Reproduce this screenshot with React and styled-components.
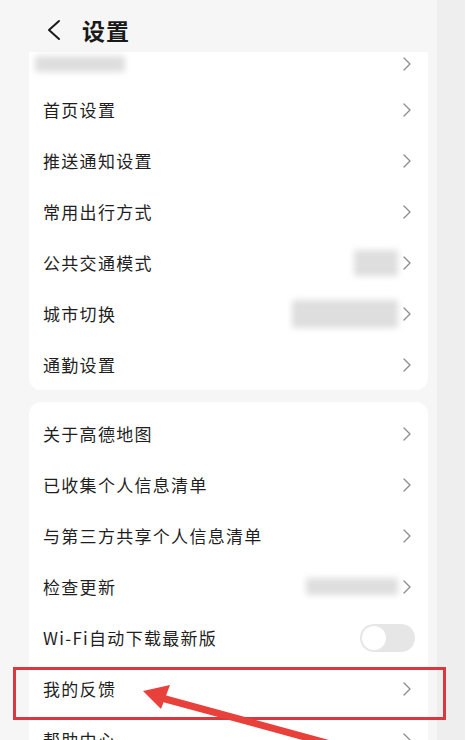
import React from "react";
import styled, { createGlobalStyle } from "styled-components";

const GlobalStyle = createGlobalStyle`
  html, body {
    margin: 0;
    padding: 0;
    background: #ffffff;
  }
  body {
    font-family: "Noto Sans CJK SC", "Noto Sans", sans-serif;
  }
`;

const topRows = [
  { label: "首页设置" },
  { label: "推送通知设置" },
  { label: "常用出行方式" },
  { label: "公共交通模式", blur: { w: 44, h: 26 } },
  { label: "城市切换", blur: { w: 106, h: 28 } },
  { label: "通勤设置" },
];

const bottomRows = [
  { label: "关于高德地图" },
  { label: "已收集个人信息清单" },
  { label: "与第三方共享个人信息清单" },
  { label: "检查更新", blur: { w: 92, h: 17 } },
  { label: "Wi-Fi自动下载最新版", toggle: true },
  { label: "我的反馈" },
  { label: "帮助中心" },
];

const Chevron = () => (
  <svg width="10" height="16" viewBox="0 0 10 16">
    <polyline
      points="2,2 8,8 2,14"
      fill="none"
      stroke="#8c8c8c"
      strokeWidth="1.3"
      strokeLinecap="round"
      strokeLinejoin="round"
    />
  </svg>
);

const SettingRow = ({ item }) => (
  <Row>
    <Label>{item.label}</Label>
    <Right>
      {item.blur && <Blur style={{ width: item.blur.w, height: item.blur.h }} />}
      {item.toggle ? (
        <Switch>
          <Knob />
        </Switch>
      ) : (
        <Chevron />
      )}
    </Right>
  </Row>
);

const App = () => {
  return (
    <Frame>
      <GlobalStyle />
      <Main>
        <Header>
          <svg width="16" height="22" viewBox="0 0 16 22">
            <polyline
              points="13,2 3,11 13,20"
              fill="none"
              stroke="#1a1a1a"
              strokeWidth="2"
              strokeLinecap="round"
              strokeLinejoin="round"
            />
          </svg>
          <Title>设置</Title>
        </Header>

        <Card $flatTop>
          <PartialRow>
            <Blur style={{ width: 90, height: 16 }} />
            <Chevron />
          </PartialRow>
          {topRows.map((item) => (
            <SettingRow key={item.label} item={item} />
          ))}
        </Card>

        <Card>
          {bottomRows.map((item) => (
            <SettingRow key={item.label} item={item} />
          ))}
        </Card>
      </Main>
      <Side />

      <Highlight />
      <Arrow width="467" height="740" viewBox="0 0 467 740">
        <line
          x1="345"
          y1="748"
          x2="158"
          y2="697"
          stroke="#e8403b"
          strokeWidth="7"
        />
        <polygon points="143,691 170,685 161,709" fill="#e8403b" />
      </Arrow>
    </Frame>
  );
};

const Frame = styled.div`
  position: relative;
  display: flex;
  width: 467px;
  height: 740px;
  overflow: hidden;
`;

const Main = styled.div`
  width: 437px;
  background: #f6f6f6;
  display: flex;
  flex-direction: column;
  > * {
    flex-shrink: 0;
  }
`;

const Side = styled.div`
  flex: 1;
  background: #eeeeee;
  border-right: 2px solid #ffffff;
`;

const Header = styled.div`
  height: 44px;
  padding: 8px 0 0 46px;
  display: flex;
  align-items: center;
  gap: 20px;
`;

const Title = styled.div`
  font-size: 23px;
  font-weight: 700;
  color: #1a1a1a;
  letter-spacing: 1px;
`;

const Card = styled.div`
  margin: 0 9px 12px 29px;
  background: #ffffff;
  border-radius: ${({ $flatTop }) => ($flatTop ? "0 0 12px 12px" : "12px")};
  padding-top: ${({ $flatTop }) => ($flatTop ? "0" : "6px")};
`;

const PartialRow = styled.div`
  height: 32px;
  display: flex;
  align-items: flex-start;
  justify-content: space-between;
  padding: 4px 16px 0 6px;
  box-sizing: border-box;
`;

const Row = styled.div`
  height: 51px;
  display: flex;
  align-items: center;
  justify-content: space-between;
  padding: 0 16px 0 14px;
`;

const Label = styled.div`
  font-size: 17px;
  letter-spacing: 1.3px;
  color: #1f1f1f;
`;

const Right = styled.div`
  display: flex;
  align-items: center;
  gap: 4px;
`;

const Blur = styled.div`
  background: #dedede;
  filter: blur(3px);
  border-radius: 2px;
`;

const Switch = styled.div`
  width: 55px;
  height: 28px;
  border-radius: 14px;
  background: #e6e6e6;
  display: flex;
  align-items: center;
  padding: 0 2px;
  box-sizing: border-box;
  margin-right: -3px;
`;

const Knob = styled.div`
  width: 24px;
  height: 24px;
  border-radius: 50%;
  background: #ffffff;
`;

const Highlight = styled.div`
  position: absolute;
  left: 13px;
  top: 667px;
  width: 433px;
  height: 53px;
  box-sizing: border-box;
  border: 3px solid #d8383e;
  pointer-events: none;
`;

const Arrow = styled.svg`
  position: absolute;
  left: 0;
  top: 0;
  pointer-events: none;
`;

export default App;
